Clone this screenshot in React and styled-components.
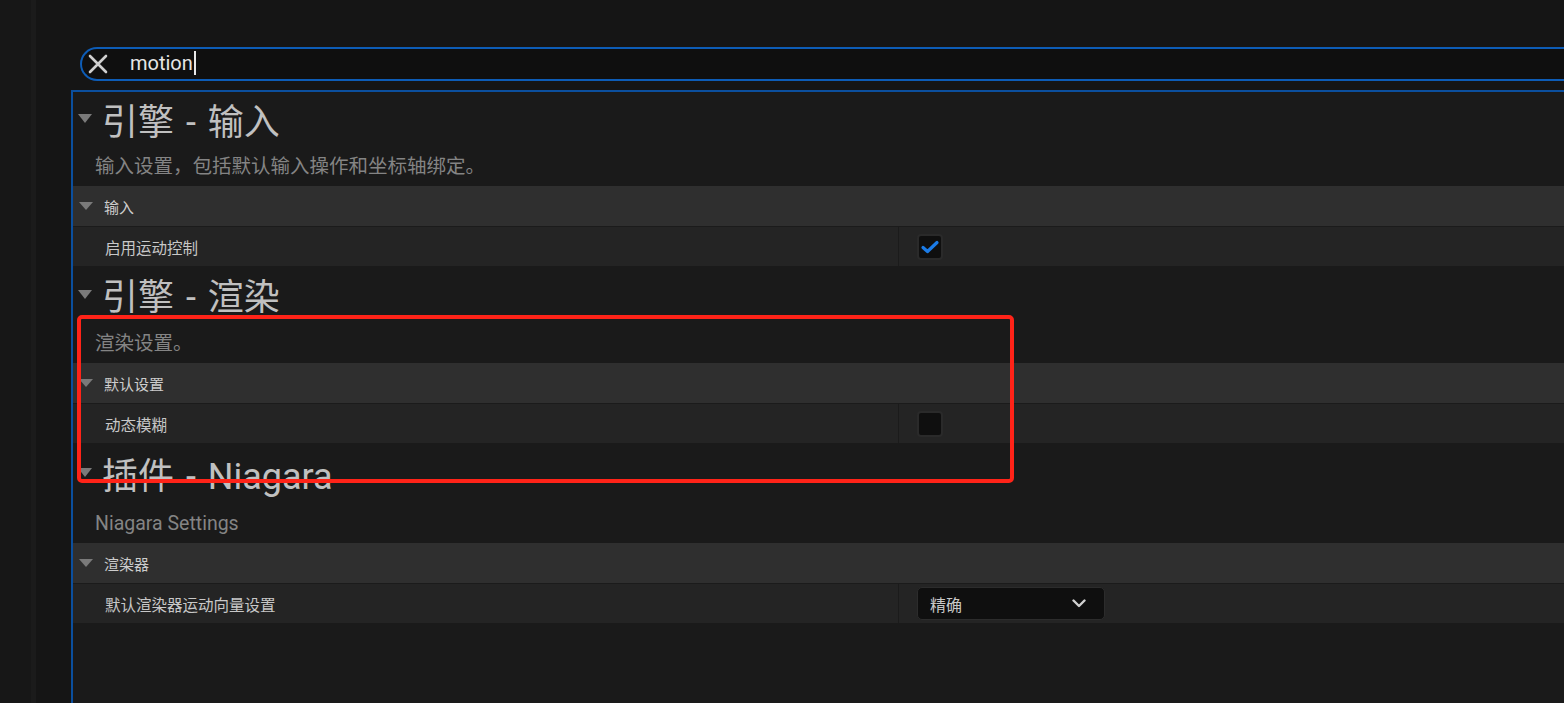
import React from 'react';
import styled, { createGlobalStyle } from 'styled-components';

const GlobalStyle = createGlobalStyle`
    html, body {
        margin: 0;
        padding: 0;
        background: #161616;
        overflow: hidden;
    }
    body {
        font-family: Roboto, "Noto Sans CJK SC", sans-serif;
    }
`

const Screen = styled.div`
    position: relative;
    display: flex;
    width: 1564px;
    height: 703px;
    overflow: hidden;
    background: #161616;
`
const Gutter = styled.div`
    width: 31px;
    flex-shrink: 0;
    background: #171717;
    border-right: 5px solid #1b1b1b;
`
const Main = styled.div`
    flex: 1;
    min-width: 0;
    display: flex;
    flex-direction: column;
    padding-top: 47px;
    background: #151515;
`
const SearchBox = styled.div`
    box-sizing: border-box;
    margin-left: 44px;
    width: calc(100% + 40px);
    height: 34px;
    border: 2px solid #0d5cb6;
    border-right: none;
    border-radius: 17px 0 0 17px;
    background: #0f0f0f;
    display: flex;
    align-items: center;
    padding-left: 6px;
    gap: 22px;
`
const SearchText = styled.span`
    font-family: Roboto, sans-serif;
    font-size: 20px;
    color: #e6e6e6;
    display: flex;
    align-items: center;
    padding-bottom: 3px;
`
const Caret = styled.span`
    display: inline-block;
    width: 2px;
    height: 24px;
    margin-left: 1px;
    background: #e8e8e8;
`
const Panel = styled.div`
    flex: 1;
    margin-top: 9px;
    margin-left: 35px;
    background: #1a1a1a;
    border-top: 2px solid #0b4f9e;
    border-left: 2px solid #0b4f9e;
`
const Triangle = styled.span`
    flex-shrink: 0;
    width: 0;
    height: 0;
    border-left: 7.5px solid transparent;
    border-right: 7.5px solid transparent;
    border-top: ${p => p.$big ? 9 : 8}px solid #7a7a7a;
`
const CategoryTitle = styled.div`
    height: ${p => 59 + p.$extra}px;
    display: flex;
    align-items: center;
    gap: 10px;
    padding-left: 5px;
    padding-bottom: 6px;
    box-sizing: border-box;
    font-size: 36px;
    color: #c0c0c0;
    word-spacing: 3px;
    white-space: pre;
`
const Description = styled.div`
    height: 35px;
    line-height: 32px;
    padding-left: 22px;
    font-size: 19.5px;
    color: #848484;
`
const SectionHead = styled.div`
    height: 40px;
    display: flex;
    align-items: center;
    gap: 11px;
    padding-left: 6px;
    background: #2f2f2f;
    border-bottom: 1px solid #1b1b1b;
    font-size: 15px;
    color: #cdcdcd;
`
const PropRow = styled.div`
    display: grid;
    grid-template-columns: 826px 1fr;
    height: 39px;
    background: #242424;
`
const PropName = styled.div`
    display: flex;
    align-items: center;
    padding-left: 32px;
    border-right: 1px solid #1b1b1b;
    font-size: 15.5px;
    color: #c8c8c8;
`
const PropValue = styled.div`
    display: flex;
    align-items: center;
    padding-left: 18px;
`
const CheckBox = styled.div`
    box-sizing: border-box;
    width: 26px;
    height: 26px;
    border: 2px solid #2a2a2a;
    border-radius: 4px;
    background: #0f0f0f;
    display: flex;
    align-items: center;
    justify-content: center;
`
const Combo = styled.div`
    box-sizing: border-box;
    width: 188px;
    height: 33px;
    display: flex;
    align-items: center;
    justify-content: space-between;
    padding: 0 18px 0 12px;
    border: 1px solid #2c2c2c;
    border-radius: 5px;
    background: #0f0f0f;
    font-size: 16px;
    color: #c8c8c8;
`
const Highlight = styled.div`
    position: absolute;
    left: 77px;
    top: 315px;
    width: 937px;
    height: 168px;
    box-sizing: border-box;
    border: 4px solid #ff2318;
    border-radius: 5px;
    pointer-events: none;
`

const CloseIcon = () => (
    <svg width="20" height="20" viewBox="0 0 20 20">
        <path d="M2 2 L18 18 M18 2 L2 18" stroke="#cfcfcf" strokeWidth="2.6" strokeLinecap="round" />
    </svg>
)

const CheckIcon = () => (
    <svg width="22" height="22" viewBox="0 0 22 22">
        <path d="M4 11.5 L8.5 15.5 L18 6.5" fill="none" stroke="#1b7be6" strokeWidth="3.2" strokeLinecap="round" strokeLinejoin="round" />
    </svg>
)

const ChevronIcon = () => (
    <svg width="14" height="9" viewBox="0 0 14 9">
        <path d="M1.5 1.5 L7 7 L12.5 1.5" fill="none" stroke="#d0d0d0" strokeWidth="2.4" strokeLinecap="round" strokeLinejoin="round" />
    </svg>
)

const categories = [
    {
        title: '引擎 - 输入',
        desc: '输入设置，包括默认输入操作和坐标轴绑定。',
        section: '输入',
        prop: '启用运动控制',
        value: { kind: 'check', on: true },
    },
    {
        title: '引擎 - 渲染',
        desc: '渲染设置。',
        section: '默认设置',
        prop: '动态模糊',
        value: { kind: 'check', on: false },
    },
    {
        title: '插件 - Niagara',
        desc: 'Niagara Settings',
        section: '渲染器',
        prop: '默认渲染器运动向量设置',
        value: { kind: 'combo', text: '精确' },
    },
]

const Category = ({ cat, index }) => (
    <>
        <CategoryTitle $extra={index * 3}>
            <Triangle $big />
            {cat.title}
        </CategoryTitle>
        <Description>{cat.desc}</Description>
        <SectionHead>
            <Triangle />
            {cat.section}
        </SectionHead>
        <PropRow>
            <PropName>{cat.prop}</PropName>
            <PropValue>
                {cat.value.kind === 'check' ?
                    <CheckBox>{cat.value.on && <CheckIcon />}</CheckBox>
                :
                    <Combo>
                        {cat.value.text}
                        <ChevronIcon />
                    </Combo>
                }
            </PropValue>
        </PropRow>
    </>
)

const App = () => {
    return (
        <Screen>
            <GlobalStyle />
            <Gutter />
            <Main>
                <SearchBox>
                    <CloseIcon />
                    <SearchText>motion<Caret /></SearchText>
                </SearchBox>
                <Panel>
                    {categories.map((cat, index) => (
                        <Category cat={cat} index={index} key={index} />
                    ))}
                </Panel>
            </Main>
            <Highlight />
        </Screen>
    )
}

export default App;
